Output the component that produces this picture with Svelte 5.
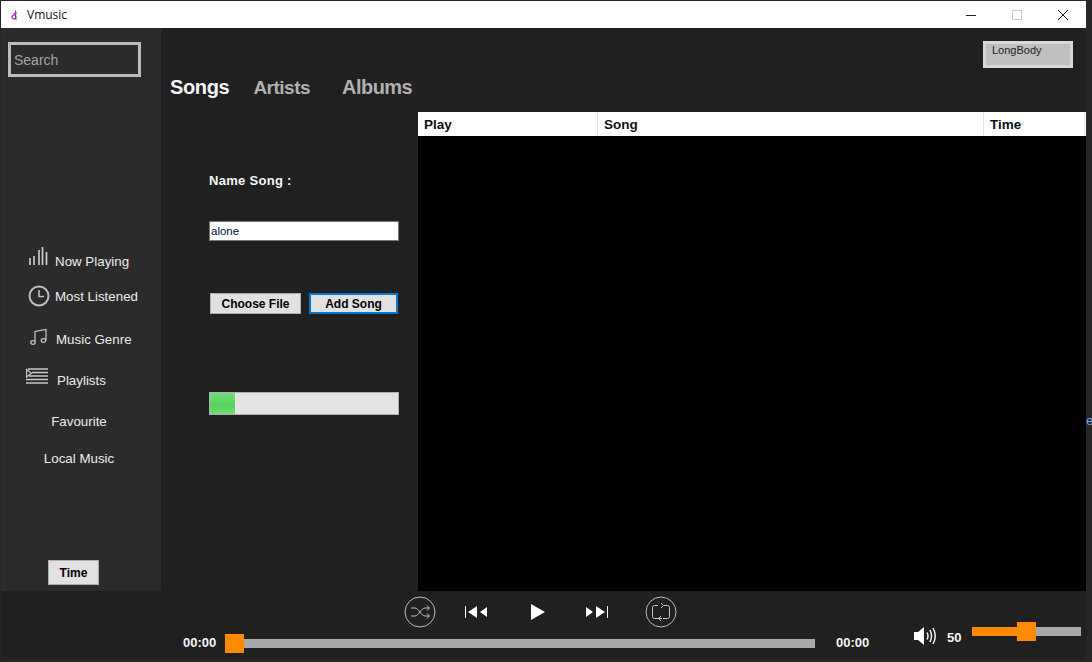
<script>
  const nav = [
    { label: 'Now Playing', icon: 'bars', x: 55 },
    { label: 'Most Listened', icon: 'clock', x: 55 },
    { label: 'Music Genre', icon: 'note', x: 56 },
    { label: 'Playlists', icon: 'list', x: 57 }
  ];
  const cols = ['Play', 'Song', 'Time'];
</script>

<div class="app">
  <div class="window">
    <header class="titlebar">
      <svg class="logo" viewBox="0 0 12 12" width="12" height="12">
        <path d="M6.5 1.5 L6.5 9" stroke="#b02ad0" stroke-width="1.2" fill="none"/>
        <circle cx="5" cy="8" r="2" stroke="#7a20c0" stroke-width="1.2" fill="none"/>
        <path d="M4 5 L8 4" stroke="#e02060" stroke-width="1"/>
        <path d="M5 10.5 L8 10.5" stroke="#e8a020" stroke-width="1"/>
      </svg>
      <span class="title">Vmusic</span>
      <div class="winbtns">
        <span class="wb"><svg width="12" height="12" viewBox="0 0 12 12"><path d="M1 6.5H11" stroke="#222" stroke-width="1"/></svg></span>
        <span class="wb"><svg width="12" height="12" viewBox="0 0 12 12"><rect x="1.5" y="1.5" width="9" height="9" fill="none" stroke="#ccc"/></svg></span>
        <span class="wb"><svg width="12" height="12" viewBox="0 0 12 12"><path d="M1 1L11 11M11 1L1 11" stroke="#222" stroke-width="1"/></svg></span>
      </div>
    </header>

    <div class="main">
      <aside class="sidebar">
        <div class="search">Search</div>
        <nav class="nav">
          {#each nav as item}
            <div class="nav-item" style="padding-left:{item.x}px">
              <span class="nav-icon {item.icon}">
                {#if item.icon === 'bars'}
                  <svg width="20" height="20" viewBox="0 0 20 20"><path d="M2 18V11M6 18V9M11 18V3M14.5 18V0M18.5 18V5" stroke="#c8c8c8" stroke-width="1.7" fill="none"/></svg>
                {:else if item.icon === 'clock'}
                  <svg width="22" height="22" viewBox="0 0 22 22"><circle cx="11" cy="11" r="9.5" fill="none" stroke="#bdbdbd" stroke-width="2"/><path d="M11 5V11.5H16" fill="none" stroke="#bdbdbd" stroke-width="1.6"/></svg>
                {:else if item.icon === 'note'}
                  <svg width="18" height="18" viewBox="0 0 18 18"><path d="M5 14.5V3.5L16 1.5V12" fill="none" stroke="#c8c8c8" stroke-width="1.2"/><ellipse cx="3" cy="14.5" rx="2.2" ry="1.8" fill="none" stroke="#c8c8c8" stroke-width="1.2"/><ellipse cx="13.5" cy="12.5" rx="2.2" ry="1.8" fill="none" stroke="#c8c8c8" stroke-width="1.2"/></svg>
                {:else}
                  <svg width="22" height="17" viewBox="0 0 22 17"><path d="M.6 1.5V9L5.5 5.2Z" fill="none" stroke="#c8c8c8" stroke-width="1.2"/><path d="M2 1H22M6 4.5H22M3 8H22M0 11.5H22M0 15H22" stroke="#c8c8c8" stroke-width="1.6"/></svg>
                {/if}
              </span>
              <span>{item.label}</span>
            </div>
          {/each}
          <div class="nav-item center">Favourite</div>
          <div class="nav-item center">Local Music</div>
        </nav>
        <button class="win-btn time-btn">Time</button>
      </aside>

      <section class="content">
        <div class="topbar"><div class="body-select">LongBody</div></div>
        <div class="tabs">
          <span class="tab active">Songs</span>
          <span class="tab artists">Artists</span>
          <span class="tab albums">Albums</span>
        </div>
        <div class="panes">
          <div class="form">
            <div class="label">Name Song :</div>
            <div class="input">alone</div>
            <div class="buttons">
              <button class="win-btn choose">Choose File</button>
              <button class="win-btn add">Add Song</button>
            </div>
            <div class="progress"><div class="progress-fill"></div></div>
          </div>
          <div class="table">
            <div class="thead">
              {#each cols as c}<div class="th">{c}</div>{/each}
            </div>
            <div class="tbody"></div>
          </div>
        </div>
      </section>
    </div>

    <footer class="player">
      <div class="controls">
        <svg class="round" width="32" height="32" viewBox="0 0 32 32">
          <circle cx="16" cy="16" r="15" fill="none" stroke="#bdbdbd" stroke-width="1"/>
          <path d="M7 12H11C14.5 12 17 20 21 20H25M7 20H11C14.5 20 17 12 21 12H25M23 9.5L25.5 12L23 14.5M23 17.5L25.5 20L23 22.5" fill="none" stroke="#c4c4c4" stroke-width="1"/>
        </svg>
        <svg class="prev" width="23" height="12" viewBox="0 0 23 12"><path d="M.5 0V12" stroke="#fff" stroke-width="1"/><path d="M3 6L12 0V12ZM15 6L22 1V11Z" fill="#fff"/></svg>
        <svg class="play" width="14" height="16" viewBox="0 0 14 16"><path d="M0 0L14 8L0 16Z" fill="#fff"/></svg>
        <svg class="next" width="23" height="12" viewBox="0 0 23 12"><path d="M22.5 0V12" stroke="#fff" stroke-width="1"/><path d="M20 6L11 0V12ZM8 6L1 1V11Z" fill="#fff"/></svg>
        <svg class="round repeat" width="32" height="32" viewBox="0 0 32 32">
          <circle cx="16" cy="16" r="15" fill="none" stroke="#bdbdbd" stroke-width="1"/>
          <path d="M13 9.5H9.5Q7.5 9.5 7.5 11.5V20.5Q7.5 22.5 9.5 22.5H17M19 9.5H22.5Q24.5 9.5 24.5 11.5V20.5Q24.5 22.5 22.5 22.5H18" fill="none" stroke="#c4c4c4" stroke-width="1"/>
          <path d="M16 7L18.5 9.5L16 12M16 20L13.5 22.5L16 25" fill="none" stroke="#c4c4c4" stroke-width="1"/>
        </svg>
      </div>
      <div class="seek-row">
        <span class="t t1">00:00</span>
        <div class="seek"><div class="thumb"></div></div>
        <span class="t t2">00:00</span>
        <svg class="speaker" width="24" height="22" viewBox="0 0 24 22">
          <path d="M1 7H5L11 2V20L5 15H1Z" fill="#fff"/>
          <path d="M14 7.5Q16 11 14 14.5M17 5Q20 11 17 17M20 3Q24.5 11 20 19" fill="none" stroke="#f2f2f2" stroke-width="1.5"/>
        </svg>
        <span class="vol-num">50</span>
        <div class="vol"><div class="vol-fill"></div><div class="vol-thumb"></div></div>
      </div>
    </footer>
  </div>
  <span class="clip-e">e</span>
</div>

<style>
  :global(body) { margin: 0; background: #1a1a1a; }
  .app {
    position: relative;
    width: 1092px;
    height: 662px;
    overflow: hidden;
    background: #262626;
    padding: 1px 6px 3px 1px;
    box-sizing: border-box;
    font-family: "Liberation Sans", Arial, sans-serif;
  }
  .window { display: flex; flex-direction: column; height: 100%; background: #202020; }
  .titlebar {
    height: 27px; flex: none; background: #fff; display: flex; align-items: center;
    padding-left: 8px; box-sizing: border-box;
  }
  .logo { flex: none; }
  .title { margin-left: 6px; font: 12px "Open Sans", sans-serif; color: #111; }
  .winbtns { margin-left: auto; display: flex; margin-right: -1px; transform: translateX(-1px); }
  .wb { width: 46px; display: flex; justify-content: center; }
  .wb svg { display: block; }
  .main { display: flex; height: 563px; flex: none; }
  .sidebar {
    width: 160px; flex: none; background: #2b2b2b; display: flex; flex-direction: column;
    padding: 14px 0 6px; box-sizing: border-box; position: relative;
  }
  .search {
    width: 133px; height: 35px; margin-left: 7px; box-sizing: border-box;
    border: 3px solid #bcbcbc; color: #a3a3a3; font-size: 14px; line-height: 30px;
    padding-left: 3px; background: #2b2b2b;
  }
  .nav {
    margin-top: 175px; display: grid;
    grid-template-rows: 35px 43px 41px 41px 37px 20px;
    color: #ececec; font-size: 13.33px;
  }
  .nav-item { position: relative; height: 20px; line-height: 20px; white-space: nowrap; margin-left: -1px; }
  .nav-item.center { text-align: center; padding-left: 0; width: 158px; }
  .nav-icon { position: absolute; display: block; }
  .nav-icon svg { display: block; }
  .bars { left: 28px; top: -5px; }
  .clock { left: 28px; top: -2px; }
  .note { left: 30px; top: -2px; }
  .list { left: 26px; top: -3px; }
  .win-btn {
    font: bold 12px "Liberation Sans", Arial, sans-serif; color: #000; background: #e1e1e1;
    border: 1px solid #adadad; padding: 0; box-sizing: border-box; border-radius: 0;
  }
  .time-btn { width: 51px; height: 25px; margin: auto 0 0 47px; }
  .content { flex: 1; min-width: 0; display: flex; flex-direction: column; }
  .topbar { height: 40px; flex: none; display: flex; justify-content: flex-end; align-items: flex-end; padding-right: 13px; }
  .body-select {
    width: 90px; height: 27px; box-sizing: border-box; border: 3px solid #d8d8d8; background: #bfbfbf;
    color: #222; font: 11px "Liberation Sans", Arial, sans-serif; padding: 0 6px; line-height: 13px;
  }
  .tabs { height: 44px; flex: none; display: flex; padding-left: 9px; align-items: flex-start; }
  .tab { font-size: 20px; font-weight: bold; color: #b0b0b0; line-height: 24px; margin-top: 7px; }
  .tab.active { color: #f5f5f5; letter-spacing: -.35px; }
  .artists { margin-left: 24px; font-size: 19px; letter-spacing: -.5px; margin-top: 8px; }
  .albums { margin-left: 32px; letter-spacing: -.55px; }
  .panes { flex: 1; display: flex; min-height: 0; }
  .form { width: 257px; flex: none; padding: 61px 0 0 48px; box-sizing: border-box; }
  .label { font-size: 13px; font-weight: bold; color: #f5f5f5; line-height: 15px; letter-spacing: .3px; }
  .input {
    width: 190px; height: 20px; margin-top: 33px; box-sizing: border-box; background: #fff;
    border: 1px solid #777; font-size: 11.5px; line-height: 18px; padding-left: 1px; color: #001040;
  }
  .buttons { display: flex; margin: 52px 0 0 1px; gap: 8px; }
  .choose { width: 91px; height: 21px; }
  .add { width: 89px; height: 21px; border: 2px solid #0078d7; }
  .progress { width: 190px; height: 23px; margin-top: 78px; background: #e4e4e4; border: 1px solid #b0b0b0; box-sizing: border-box; }
  .progress-fill { width: 25px; height: 100%; background: linear-gradient(#74de7a, #55d25c 60%, #6fdc76); }
  .table { flex: 1; display: flex; flex-direction: column; }
  .thead { height: 24px; flex: none; background: #fff; display: grid; grid-template-columns: 180px 386px 101px; }
  .th { font-size: 13.5px; font-weight: bold; color: #111; padding-left: 6px; line-height: 25px; border-right: 1px solid #e2e2e2; }
  .tbody { flex: 1; background: #000; }
  .player { flex: 1; min-height: 0; background: #202020; display: flex; flex-direction: column; }
  .controls { height: 41px; flex: none; display: flex; align-items: center; padding-left: 403px; }
  .round { flex: none; }
  .prev { margin-left: 29px; }
  .play { margin-left: 43px; }
  .next { margin-left: 40px; }
  .repeat { margin-left: 37px; }
  .seek-row { display: flex; align-items: flex-start; height: 28px; padding-left: 182px; }
  .t { color: #f5f5f5; font-size: 13px; font-weight: bold; width: 33px; line-height: 15px; margin-top: 3px; }
  .t2 { margin-left: 21px; }
  .seek { width: 590px; height: 9px; margin-left: 9px; background: #a9a9a9; position: relative; margin-top: 7px; }
  .thumb { position: absolute; left: 0; top: -5px; width: 19px; height: 19px; background: #ff8a00; }
  .speaker { margin-left: 44px; margin-top: -7px; flex: none; }
  .vol-num { color: #f5f5f5; font-size: 13px; font-weight: bold; margin-left: 10px; line-height: 15px; margin-top: -2px; }
  .vol { width: 109px; height: 9px; margin-left: 11px; background: #a9a9a9; position: relative; margin-top: -5px; }
  .vol-fill { width: 50px; height: 100%; background: #ff8a00; }
  .vol-thumb { position: absolute; left: 45px; top: -5px; width: 19px; height: 19px; background: #ff8a00; }
  .clip-e { position: absolute; left: 1086px; top: 413px; color: #6fa8dc; font-size: 13px; line-height: 15px; }
</style>
